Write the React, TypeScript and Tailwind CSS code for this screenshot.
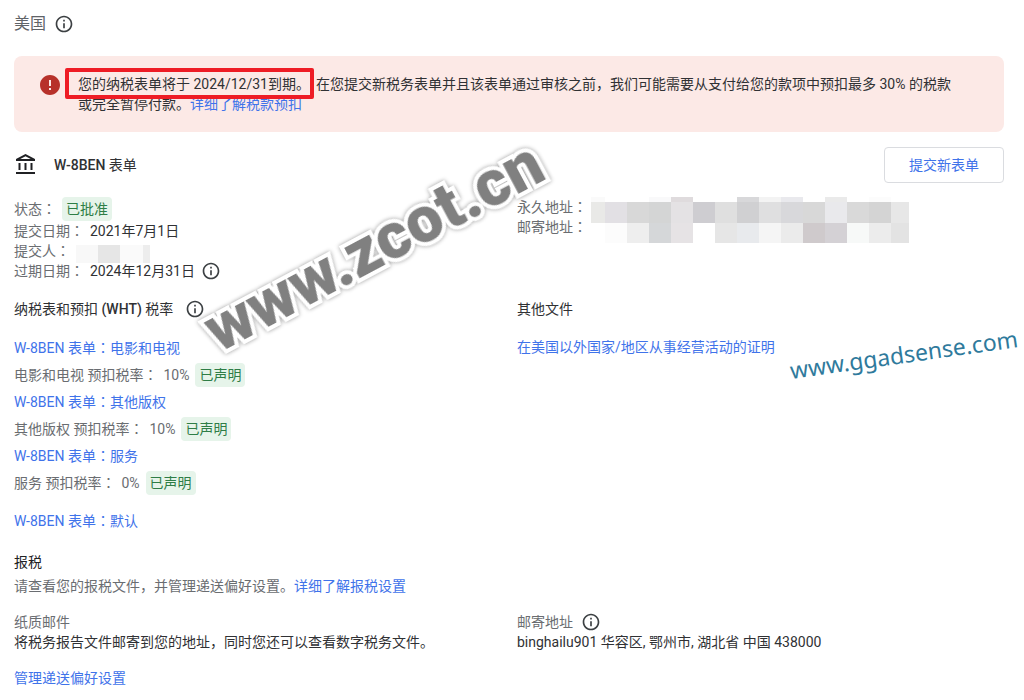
import type { ReactNode } from "react";
import { MdError, MdInfoOutline, MdOutlineAccountBalance } from "react-icons/md";

const rates = [
  { name: "电影和电视", rate: "10%" },
  { name: "其他版权", rate: "10%" },
  { name: "服务", rate: "0%" },
];

// masked address: one colour per cell, three strips
const addressMask = [
  {
    height: "h-[5px]",
    cells: ["bg-[#fafafa]", "bg-white", "bg-white", "bg-[#f9f9fa]", "bg-[#dfdbdd]", "bg-white", "bg-white", "bg-[#d8d8da]", "bg-[#f3f3f3]", "bg-[#e9e9ed]", "bg-white", "bg-[#eaeaea]", "bg-white", "bg-[#fcfcfc]", "bg-white"],
  },
  {
    height: "h-[21px]",
    cells: ["bg-[#e9e9e7]", "bg-[#e2e0e4]", "bg-[#d8d8d8]", "bg-[#d4d5d5]", "bg-[#e4e2e4]", "bg-[#cecdd1]", "bg-[#dfdfdf]", "bg-[#d0d0d2]", "bg-[#dfdfe0]", "bg-[#d8d8db]", "bg-[#d8d8d8]", "bg-[#e9e9ec]", "bg-[#d9d9d9]", "bg-[#d4d4d4]", "bg-[#e7e7e7]"],
  },
  {
    height: "h-[20px]",
    cells: ["bg-white", "bg-[#fcfcfc]", "bg-[#eeeeee]", "bg-[#d5d7d9]", "bg-[#e6e3e5]", "bg-white", "bg-[#e6e6e6]", "bg-[#e8eaed]", "bg-[#f5f5f5]", "bg-[#ebebeb]", "bg-[#cfcacc]", "bg-[#d4d1d5]", "bg-[#f7f9f8]", "bg-[#ececec]", "bg-[#e3e3e3]"],
  },
];

// the TC face centres the colon in its square
function Colon() {
  return <span className="font-['Noto_Sans_CJK_TC',sans-serif] leading-none">：</span>;
}

function InfoButton({ label }: { label: string }) {
  return (
    <button type="button" aria-label={label} className="shrink-0 text-[#3c4043]">
      <MdInfoOutline size={20} />
    </button>
  );
}

function Badge({ children }: { children: ReactNode }) {
  return (
    <span className="inline-flex h-6 items-center rounded bg-[#e6f4ea] px-1 text-[#2e7d46]">
      {children}
    </span>
  );
}

function TextLink({ children }: { children: ReactNode }) {
  return (
    <a href="#" className="text-[#3f73ea] hover:underline">
      {children}
    </a>
  );
}

function Label({ children }: { children: ReactNode }) {
  return (
    <span className="text-[#6a6d71]">
      {children}
      <Colon />
    </span>
  );
}

function Alert() {
  return (
    <div className="mt-[18px] flex rounded-lg bg-[#fce9e6] py-[18px] pr-12 pl-6">
      <MdError size={24} className="-mt-px mr-4 shrink-0 text-[#b7312a]" />
      <p>
        <span className="relative mr-1.5">
          您的纳税表单将于 2024/12/31到期。
          <span className="pointer-events-none absolute -top-2 -right-1 -left-[13px] h-[31px] rounded-xs border-4 border-[#ee1c25]" />
        </span>
        在您提交新税务表单并且该表单通过审核之前，我们可能需要从支付给您的款项中预扣最多 30% 的税款或完全暂停付款。
        <TextLink>详细了解税款预扣</TextLink>
      </p>
    </div>
  );
}

export default function App() {
  return (
    <main className="relative min-h-screen overflow-hidden bg-white pt-2.5 pr-5 pb-2 pl-[14px] font-[Roboto,'Noto_Sans_CJK_SC',sans-serif] text-sm leading-5 text-[#303134]">
      <header className="flex h-7 items-center gap-2">
        <h1 className="text-base text-[#5f6368]">美国</h1>
        <InfoButton label="美国" />
      </header>

      <Alert />

      <div className="mt-[15px] flex items-center">
        <MdOutlineAccountBalance size={24} className="mr-4 text-[#202124]" />
        <h2>
          <span className="font-medium">W-8BEN</span> 表单
        </h2>
        <button
          type="button"
          className="ml-auto h-9 rounded border border-[#dadce0] px-6 text-[#3f73ea] hover:bg-blue-50"
        >
          提交新表单
        </button>
      </div>

      <section className="mt-[14px] grid grid-cols-2 gap-x-4">
        <div>
          <div className="flex h-6 items-center gap-1.5">
            <Label>状态</Label>
            <Badge>已批准</Badge>
          </div>
          <div className="flex gap-1.5">
            <Label>提交日期</Label>
            <span>2021年7月1日</span>
          </div>
          <div className="flex h-5 gap-1.5">
            <Label>提交人</Label>
            <span className="mt-1 flex h-[18px] w-[74px]">
              <span className="flex-3 bg-[#f8f8f8]" />
              <span className="flex-3 bg-[#e6e6e6]" />
              <span className="flex-3 bg-[#fafafa]" />
              <span className="flex-1 bg-[#ededed]" />
            </span>
          </div>
          <div className="flex items-center gap-1.5">
            <Label>过期日期</Label>
            <span>2024年12月31日</span>
            <InfoButton label="过期日期" />
          </div>
        </div>

        <div className="flex gap-1">
          <div className="flex shrink-0 flex-col">
            <Label>永久地址</Label>
            <Label>邮寄地址</Label>
          </div>
          <div className="w-[318px]">
            {addressMask.map((strip) => (
              <div key={strip.height} className="flex">
                {strip.cells.map((cell, i) => (
                  <span key={i} className={`${strip.height} ${cell} ${i === 0 ? "w-[14px]" : i === 14 ? "w-[18px]" : "w-[22px]"}`} />
                ))}
              </div>
            ))}
          </div>
        </div>
      </section>

      <section className="mt-[18px] grid grid-cols-2 gap-x-4">
        <div>
          <div className="flex items-center gap-3">
            <h3>
              纳税表和预扣 <span className="font-medium">(WHT)</span> 税率
            </h3>
            <InfoButton label="税率" />
          </div>
          <ul className="mt-[15px]">
            {rates.map(({ name, rate }) => (
              <li key={name} className="text-[#6a6d71]">
                <div className="flex h-[27px] items-center">
                  <TextLink>
                    W-8BEN 表单
                    <Colon />
                    {name}
                  </TextLink>
                </div>
                <div className="flex h-[27px] items-center gap-1.5">
                  <Label>{name} 预扣税率</Label>
                  <span>{rate}</span>
                  <Badge>已声明</Badge>
                </div>
              </li>
            ))}
          </ul>
          <p className="mt-[15px]">
            <TextLink>
              W-8BEN 表单
              <Colon />
              默认
            </TextLink>
          </p>
        </div>
        <div>
          <h3>其他文件</h3>
          <p className="mt-[18px]">
            <TextLink>在美国以外国家/地区从事经营活动的证明</TextLink>
          </p>
        </div>
      </section>

      <section className="mt-[21px]">
        <h3 className="text-[#202124]">报税</h3>
        <p className="mt-1 text-[#6a6d71]">
          请查看您的报税文件，并管理递送偏好设置。
          <TextLink>详细了解报税设置</TextLink>
        </p>
        <div className="mt-4 grid grid-cols-2 gap-x-4">
          <div>
            <h4 className="text-[#6a6d71]">纸质邮件</h4>
            <p>将税务报告文件邮寄到您的地址，同时您还可以查看数字税务文件。</p>
            <p className="mt-4">
              <TextLink>管理递送偏好设置</TextLink>
            </p>
          </div>
          <div>
            <div className="flex items-center gap-2 text-[#6a6d71]">
              <h4>邮寄地址</h4>
              <InfoButton label="邮寄地址" />
            </div>
            <p>binghailu901 华容区, 鄂州市, 湖北省 中国 438000</p>
          </div>
        </div>
      </section>

      <span className="pointer-events-none absolute top-[214px] left-[187px] -rotate-28 font-[Roboto,sans-serif] text-[65px] leading-none font-black text-[#808080] [paint-order:stroke_fill] [-webkit-text-stroke:8px_white] [filter:drop-shadow(0_0_2px_rgb(0_0_0/0.4))]">
        www.zcot.cn
      </span>
      <span className="pointer-events-none absolute top-[340px] right-[5px] -rotate-8 font-['Noto_Sans',sans-serif] text-[23px] leading-7 text-[#2f7a9c]">
        www.ggadsense.com
      </span>
    </main>
  );
}
